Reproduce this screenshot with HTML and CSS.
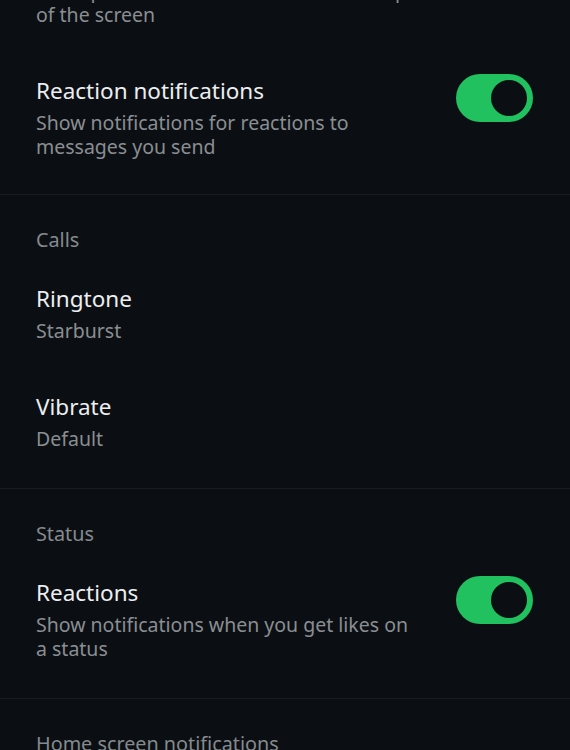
FILE: index.html
```html
<!DOCTYPE html>
<html lang="en">

<head>
    <meta charset="UTF-8">
    <meta name="viewport" content="width=device-width, initial-scale=1.0">
    <title>Notifications</title>
    <link rel="stylesheet" href="styles.css">
</head>

<body>
    <div class="settings">
        <div class="section section-first">
            <div class="item">
                <div class="item-text">
                    <div class="item-title">Use high priority notifications</div>
                    <div class="item-sub">Show previews of notifications at the top of the screen</div>
                </div>
                <div class="toggle on"><span class="knob"></span></div>
            </div>
            <div class="item">
                <div class="item-text">
                    <div class="item-title">Reaction notifications</div>
                    <div class="item-sub">Show notifications for reactions to messages you send</div>
                </div>
                <div class="toggle on"><span class="knob"></span></div>
            </div>
        </div>

        <div class="section">
            <div class="section-title">Calls</div>
            <div class="item">
                <div class="item-text">
                    <div class="item-title">Ringtone</div>
                    <div class="item-sub">Starburst</div>
                </div>
            </div>
            <div class="item">
                <div class="item-text">
                    <div class="item-title">Vibrate</div>
                    <div class="item-sub">Default</div>
                </div>
            </div>
        </div>

        <div class="section">
            <div class="section-title">Status</div>
            <div class="item">
                <div class="item-text">
                    <div class="item-title">Reactions</div>
                    <div class="item-sub">Show notifications when you get likes on a status</div>
                </div>
                <div class="toggle on"><span class="knob"></span></div>
            </div>
        </div>

        <div class="section">
            <div class="section-title">Home screen notifications</div>
        </div>
    </div>
</body>

</html>
```

FILE: styles.css
```css
body {
    font-family: "Noto Sans", sans-serif;
    margin: 0;
    padding: 0;
    background-color: #0b0f13;
    color: #e9ecee;
    overflow: hidden;
}

/* list is scrolled a bit, first item sits above the top edge */
.settings {
    margin-top: -80px;
}

.section {
    border-bottom: 1px solid #181d21;
    padding-top: 32px;
    padding-bottom: 12px;
}

.section-first {
    padding-top: 0;
    padding-bottom: 10px;
}

.section-title {
    padding: 0 36px;
    margin-bottom: 8px;
    font-size: 19.8px;
    line-height: 25px;
    color: #858a8e;
}

.item {
    display: flex;
    justify-content: space-between;
    align-items: flex-start;
    padding: 25px 37px 25px 36px;
}

.item-text {
    max-width: 385px;
}

.item-title {
    font-size: 22.5px;
    line-height: 28px;
    color: #eceef0;
}

.item-sub {
    margin-top: 6px;
    font-size: 19.5px;
    line-height: 24px;
    color: #8a8e92;
}

.toggle {
    flex-shrink: 0;
    width: 77px;
    height: 48px;
    margin-top: -3px;
    border-radius: 24px;
    background-color: #21c160;
    display: flex;
    align-items: center;
    justify-content: flex-end;
    padding-right: 6px;
    box-sizing: border-box;
}

.knob {
    width: 36px;
    height: 36px;
    border-radius: 50%;
    background-color: #0b0f13;
}
```
